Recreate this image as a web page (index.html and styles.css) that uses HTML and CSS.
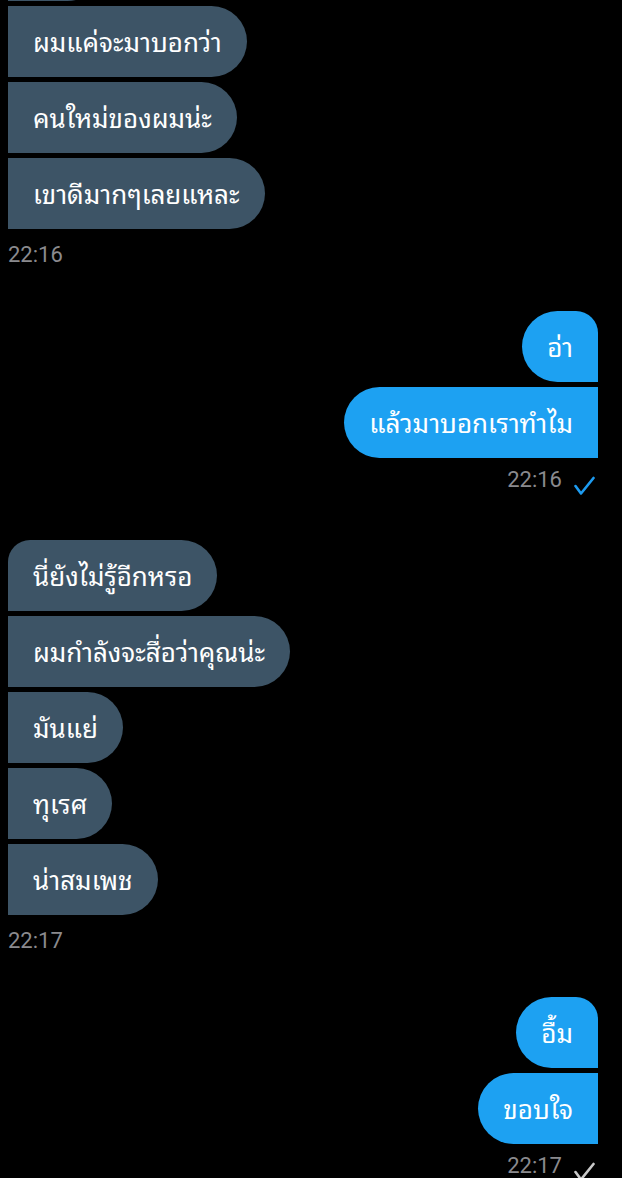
FILE: index.html
```html
<!DOCTYPE html>
<html lang="th">
<head>
<meta charset="utf-8">
<title>Chat</title>
<link rel="stylesheet" href="styles.css">
</head>
<body>
<div class="chat">
  <div class="group in gap-after-in">
    <div class="bubble first partial">ว่าไง</div>
    <div class="bubble">ผมแค่จะมาบอกว่า</div>
    <div class="bubble">คนใหม่ของผมน่ะ</div>
    <div class="bubble">เขาดีมากๆเลยแหละ</div>
    <div class="meta">22:16</div>
  </div>

  <div class="group out gap-after-out">
    <div class="bubble first">อ่า</div>
    <div class="bubble">แล้วมาบอกเราทำไม</div>
    <div class="meta">
      <span>22:16</span>
      <svg class="check read" width="24" height="20" viewBox="0 0 24 20"><path d="M1.5 10 L7 17.5 L19.5 2" fill="none" stroke="currentColor" stroke-width="2.6" stroke-linecap="round" stroke-linejoin="round"/></svg>
    </div>
  </div>

  <div class="group in gap-after-in">
    <div class="bubble first">นี่ยังไม่รู้อีกหรอ</div>
    <div class="bubble">ผมกำลังจะสื่อว่าคุณน่ะ</div>
    <div class="bubble">มันแย่</div>
    <div class="bubble">ทุเรศ</div>
    <div class="bubble">น่าสมเพช</div>
    <div class="meta">22:17</div>
  </div>

  <div class="group out">
    <div class="bubble first">อื้ม</div>
    <div class="bubble">ขอบใจ</div>
    <div class="meta">
      <span>22:17</span>
      <svg class="check sent" width="24" height="20" viewBox="0 0 24 20"><path d="M1.5 10 L7 17.5 L19.5 2" fill="none" stroke="currentColor" stroke-width="2.6" stroke-linecap="round" stroke-linejoin="round"/></svg>
    </div>
  </div>
</div>
</body>
</html>
```

FILE: styles.css
```css
html, body {
  margin: 0;
  padding: 0;
  background: #000;
}

body {
  width: 622px;
  height: 1178px;
  overflow: hidden;
  font-family: "Noto Sans Thai Looped", "Noto Sans Thai", "Noto Sans", "Roboto", sans-serif;
}

.chat {
  display: flex;
  flex-direction: column;
  padding: 0 24px 0 8px;
  margin-top: -71px;
}

.group {
  display: flex;
  flex-direction: column;
  gap: 5px;
}

.group.in {
  align-items: flex-start;
}

.group.out {
  align-items: flex-end;
}

.gap-after-in {
  margin-bottom: 43px;
}

.gap-after-out {
  margin-bottom: 44px;
}

.bubble {
  box-sizing: border-box;
  height: 71px;
  padding: 0 25px 4px;
  display: flex;
  align-items: center;
  font-size: 26px;
  line-height: 34px;
  color: #fff;
  white-space: nowrap;
}

.bubble.partial {
  height: 72px;
}

.in .bubble {
  background: #3d5466;
  border-radius: 0 35.5px 35.5px 0;
}

.in .bubble.first {
  border-top-left-radius: 22px;
}

.out .bubble {
  background: #1da1f2;
  border-radius: 35.5px 0 0 35.5px;
}

.out .bubble.first {
  border-top-right-radius: 22px;
}

.meta {
  font-family: "Roboto", "Liberation Sans", sans-serif;
  font-size: 22px;
  line-height: 26px;
  color: #8a8a8e;
  display: flex;
  align-items: flex-start;
  gap: 12px;
}

.in .meta {
  margin-top: 8px;
}

.out .meta {
  margin-top: 4px;
}

.check {
  display: block;
  margin-top: 9px;
}

.check.read {
  color: #1d9bf0;
}

.check.sent {
  color: #c9c9c9;
}
```
